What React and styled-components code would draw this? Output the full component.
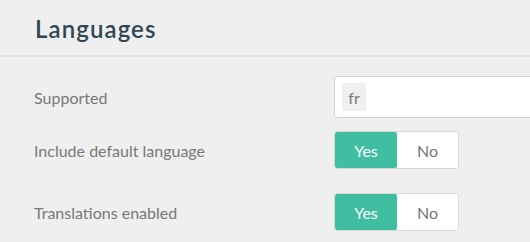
import React from "react";
import styled, { createGlobalStyle } from "styled-components";

const Global = createGlobalStyle`
  html, body {
    margin: 0;
    padding: 0;
    background: #efefef;
  }
  body {
    font-family: Lato, "Open Sans", sans-serif;
  }
`;

const rows = [
  { label: "Include default language", value: true, space: 24 },
  { label: "Translations enabled", value: true, space: 0 },
];

const App = () => {
  return (
    <Page>
      <Global />
      <Header>
        <Title>Languages</Title>
      </Header>
      <Body>
        <Row space={13}>
          <Label>Supported</Label>
          <TagInput>
            <Chip>fr</Chip>
          </TagInput>
        </Row>
        {rows.map((r) => (
          <Row key={r.label} space={r.space}>
            <Label>{r.label}</Label>
            <Toggle>
              <ToggleOption active={r.value}>Yes</ToggleOption>
              <ToggleOption active={!r.value}>No</ToggleOption>
            </Toggle>
          </Row>
        ))}
      </Body>
    </Page>
  );
};

export default App;

const Page = styled.div`
  width: 530px;
  height: 242px;
  overflow: hidden;
  background: #efefef;
`;

const Header = styled.div`
  height: 57px;
  padding-left: 35px;
  display: flex;
  align-items: center;
  border-bottom: 2px solid #e0e0e0;
  box-sizing: border-box;
`;

const Title = styled.h2`
  margin: 0;
  margin-top: 2px;
  font-size: 24px;
  font-weight: 600;
  color: #2f4754;
  letter-spacing: 1.1px;
`;

const Body = styled.div`
  padding: 19px 0 0 34px;
  display: flex;
  flex-direction: column;
`;

const Row = styled.div`
  display: grid;
  grid-template-columns: 300px 1fr;
  align-items: center;
  margin-bottom: ${(p) => p.space}px;
`;

const Label = styled.div`
  font-size: 16px;
  color: #787878;
`;

const TagInput = styled.div`
  height: 42px;
  width: 220px;
  box-sizing: border-box;
  background: #fff;
  border: 1px solid #d2d2d2;
  border-radius: 3px;
  padding: 6px 7px;
  display: flex;
  align-items: center;
`;

const Chip = styled.span`
  display: flex;
  align-items: center;
  justify-content: center;
  width: 24px;
  height: 28px;
  background: #f0f0f0;
  border-radius: 2px;
  font-size: 16px;
  color: #7a7a7a;
`;

const Toggle = styled.div`
  display: flex;
  width: 125px;
  height: 38px;
  box-sizing: border-box;
  border: 1px solid #d8d8d8;
  border-radius: 3px;
  background: #fff;
  overflow: hidden;
`;

const ToggleOption = styled.div`
  flex: ${(p) => (p.active ? "0 0 62px" : "1")};
  display: flex;
  align-items: center;
  justify-content: center;
  font-size: 16px;
  color: ${(p) => (p.active ? "#fff" : "#777")};
  background: ${(p) => (p.active ? "#3fbea2" : "#fff")};
  border-radius: 2px;
`;
